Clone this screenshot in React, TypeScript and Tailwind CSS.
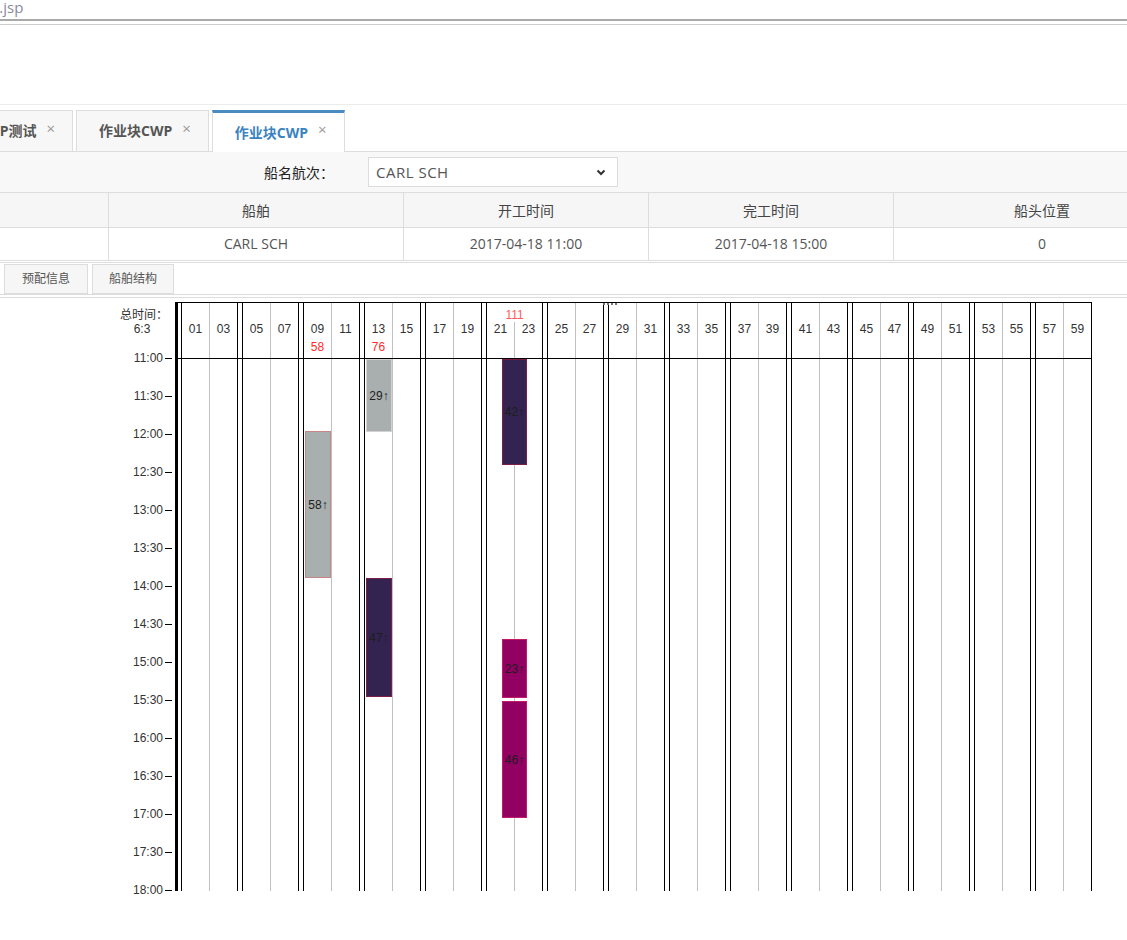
import React from 'react';

const groups = Array.from({ length: 15 }, (_, g) => {
  const a = String(g * 4 + 1).padStart(2, '0');
  const b = String(g * 4 + 3).padStart(2, '0');
  return [a, b];
});

const redUnder: Record<string, string> = { '09': '58', '13': '76' };
const groupTop: Record<number, string> = { 5: '111' };

const times = Array.from({ length: 15 }, (_, i) => {
  const h = 11 + Math.floor(i / 2);
  return `${h}:${i % 2 === 0 ? '00' : '30'}`;
});

type Block = { group: number; mid: boolean; top: number; h: number; label: string; cls: string };

const blocks: Block[] = [
  { group: 3, mid: false, top: 0, h: 73, label: '29', cls: 'bg-[#a9aeae] border-[#d2d2d2]' },
  { group: 2, mid: false, top: 72, h: 147, label: '58', cls: 'bg-[#a9aeae] border-[#c98585]' },
  { group: 5, mid: true, top: 0, h: 106, label: '42', cls: 'bg-[#332350] border-[#7c1c48]' },
  { group: 3, mid: false, top: 219, h: 119, label: '47', cls: 'bg-[#332350] border-[#7c1c48]' },
  { group: 5, mid: true, top: 280, h: 59, label: '23', cls: 'bg-[#920062] border-[#c41a6c]' },
  { group: 5, mid: true, top: 342, h: 117, label: '46', cls: 'bg-[#920062] border-[#c41a6c]' },
];

const ui = { fontFamily: '"Open Sans", "Noto Sans CJK SC", sans-serif' };
const chartFont = { fontFamily: '"Liberation Sans", Arial, "Noto Sans CJK SC", sans-serif' };

function Tab({ text, active }: { text: string; active?: boolean }) {
  return (
    <div
      className={`flex h-[42px] shrink-0 items-center pl-[22px] pr-[17px] border-x ${
        active
          ? 'border-t-[3px] border-t-[#4a8bc1] border-x-[#ddd] bg-white text-[#3b83c0]'
          : 'border-t border-[#ddd] border-b bg-[#f7f7f7] text-[#555]'
      }`}
    >
      <span className="whitespace-nowrap text-[14px] font-bold leading-none">{text}</span>
      <span className="ml-[10px] mb-[6px] text-[15px] font-normal leading-none text-[#999]">×</span>
    </div>
  );
}

function HeaderGroup({ cols, idx }: { cols: string[]; idx: number }) {
  const top = groupTop[idx];
  return (
    <div className="flex h-full w-[57px] shrink-0 flex-col border-x border-black">
      {top && (
        <div className="h-[19px] pt-[5px] text-center text-[12px] leading-[14px] text-[#ff5c5c]">{top}</div>
      )}
      <div className="flex flex-1">
        {cols.map((c, i) => (
          <div
            key={c}
            className={`flex flex-col items-center ${top ? 'pt-0' : 'pt-[19px]'} ${
              i === 0 ? 'w-[28px] border-r border-[#c0c0c0]' : 'w-[27px]'
            }`}
          >
            <span className="text-[12px] leading-[14px] text-[#333]">{c}</span>
            <span className="mt-[4px] text-[12px] leading-[14px] text-[#ff2a2a]">{redUnder[c] ?? ''}</span>
          </div>
        ))}
      </div>
    </div>
  );
}

function BodyGroup({ idx }: { idx: number }) {
  const mine = blocks.filter((b) => b.group === idx);
  return (
    <div className="relative flex h-full w-[57px] shrink-0 border-x border-black">
      <div className="h-full w-[28px] border-r border-[#c0c0c0]" />
      <div className="h-full w-[27px]" />
      {mine.map((b) => (
        <div
          key={b.label}
          className={`absolute flex items-center justify-center border text-[12px] text-[#1e1e1e] ${b.cls} ${
            b.mid ? 'left-[15px] w-[25px]' : 'left-[1px] w-[26px]'
          }`}
          style={{ top: b.top, height: b.h }}
        >
          {b.label}↑
        </div>
      ))}
    </div>
  );
}

export default function App() {
  const cols = [
    { w: 'w-[109px]', h: '', v: '' },
    { w: 'w-[295px]', h: '船舶', v: 'CARL SCH' },
    { w: 'w-[245px]', h: '开工时间', v: '2017-04-18 11:00' },
    { w: 'w-[245px]', h: '完工时间', v: '2017-04-18 15:00' },
    { w: 'w-[296px]', h: '船头位置', v: '0' },
  ];

  return (
    <div className="h-[940px] w-[1127px] overflow-hidden bg-white" style={ui}>
      {/* address line */}
      <div className="h-[19px] overflow-hidden">
        <span className="-ml-[6px] block text-[15px] leading-[15px] text-[#8a8a9c]">t.jsp</span>
      </div>
      <div className="h-[2px] bg-[#a9a9a9]" />
      <div className="h-[3px]" />
      <div className="h-px bg-[#cdcdcd]" />
      <div className="h-[79px]" />
      <div className="h-px bg-[#ececec]" />
      <div className="h-[5px]" />

      {/* tabs */}
      <div className="flex h-[42px] items-start gap-[3px] border-b border-[#ddd]">
        <div className="flex w-[73px] shrink-0 justify-end">
          <Tab text="作业块CWP测试" />
        </div>
        <Tab text="作业块CWP" />
        <Tab text="作业块CWP" active />
      </div>

      {/* filter bar */}
      <div className="flex h-[41px] items-center border-b border-[#ddd] bg-[#f8f8f8] pl-[264px]">
        <span className="w-[104px] text-[14px] text-[#222]">船名航次：</span>
        <div className="flex h-[30px] w-[250px] items-center justify-between border border-[#dcdcdc] bg-white pl-[7px] pr-[11px]">
          <span className="text-[15px] tracking-[0.5px] text-[#555]">CARL SCH</span>
          <svg width="10" height="7" viewBox="0 0 10 7">
            <polyline points="1.5,1.5 5,5 8.5,1.5" fill="none" stroke="#333" strokeWidth="2" />
          </svg>
        </div>
      </div>

      {/* ship table */}
      <div className="flex h-[35px] border-b border-[#ddd] bg-[#f6f6f6]">
        {cols.map((c, i) => (
          <div
            key={i}
            className={`${c.w} flex shrink-0 items-center justify-center text-[14px] text-[#444] ${i < 4 ? 'border-r border-[#ddd]' : ''}`}
          >
            {c.h}
          </div>
        ))}
      </div>
      <div className="flex h-[33px] border-b border-[#ddd]">
        {cols.map((c, i) => (
          <div
            key={i}
            className={`${c.w} flex shrink-0 items-center justify-center pb-[2px] text-[14px] text-[#555] ${i < 4 ? 'border-r border-[#ddd]' : ''}`}
          >
            {c.v}
          </div>
        ))}
      </div>
      <div className="h-px" />

      {/* buttons */}
      <div className="flex h-[33px] items-center gap-[4px] border-y border-[#ddd] pl-[4px]">
        <button className="h-[30px] w-[84px] border border-[#ddd] bg-[#f6f6f6] text-[12px] text-[#555]">预配信息</button>
        <button className="h-[30px] w-[82px] border border-[#ddd] bg-[#f6f6f6] text-[12px] text-[#555]">船舶结构</button>
      </div>
      <div className="h-[2px]" />
      <div className="h-px bg-[#ddd]" />
      <div className="h-[4px]" />

      {/* chart */}
      <div className="flex items-start" style={chartFont}>
        <div className="w-[175px] shrink-0">
          <div className="h-[37px] pr-[7px] pt-[6px] text-center text-[12px] leading-[14px] text-[#333]">
            <div className="ml-auto w-[48px]">总时间：</div>
            <div className="ml-auto w-[48px] pr-[4px]">6:3</div>
          </div>
          {times.map((t) => (
            <div key={t} className="flex h-[38px] items-center justify-end pr-[3px]">
              <span className="text-[12px] text-[#333]">{t}</span>
              <span className="ml-[2px] h-px w-[7px] bg-black" />
            </div>
          ))}
        </div>
        <div className="h-[589px] w-[3px] shrink-0 bg-black" />
        <div className="relative w-[914px] shrink-0">
          <div className="absolute left-[425px] top-[1px] flex gap-[2px]">
            {[0, 1, 2, 3].map((d) => (
              <span key={d} className="h-[2px] w-[2px] bg-[#777]" />
            ))}
          </div>
          <div className="flex h-[57px] gap-[4px] border-y border-black pl-[3px]">
            {groups.map((g, i) => (
              <HeaderGroup key={i} cols={g} idx={i} />
            ))}
          </div>
          <div className="flex h-[532px] gap-[4px] pl-[3px]">
            {groups.map((_, i) => (
              <BodyGroup key={i} idx={i} />
            ))}
          </div>
        </div>
      </div>
    </div>
  );
}
